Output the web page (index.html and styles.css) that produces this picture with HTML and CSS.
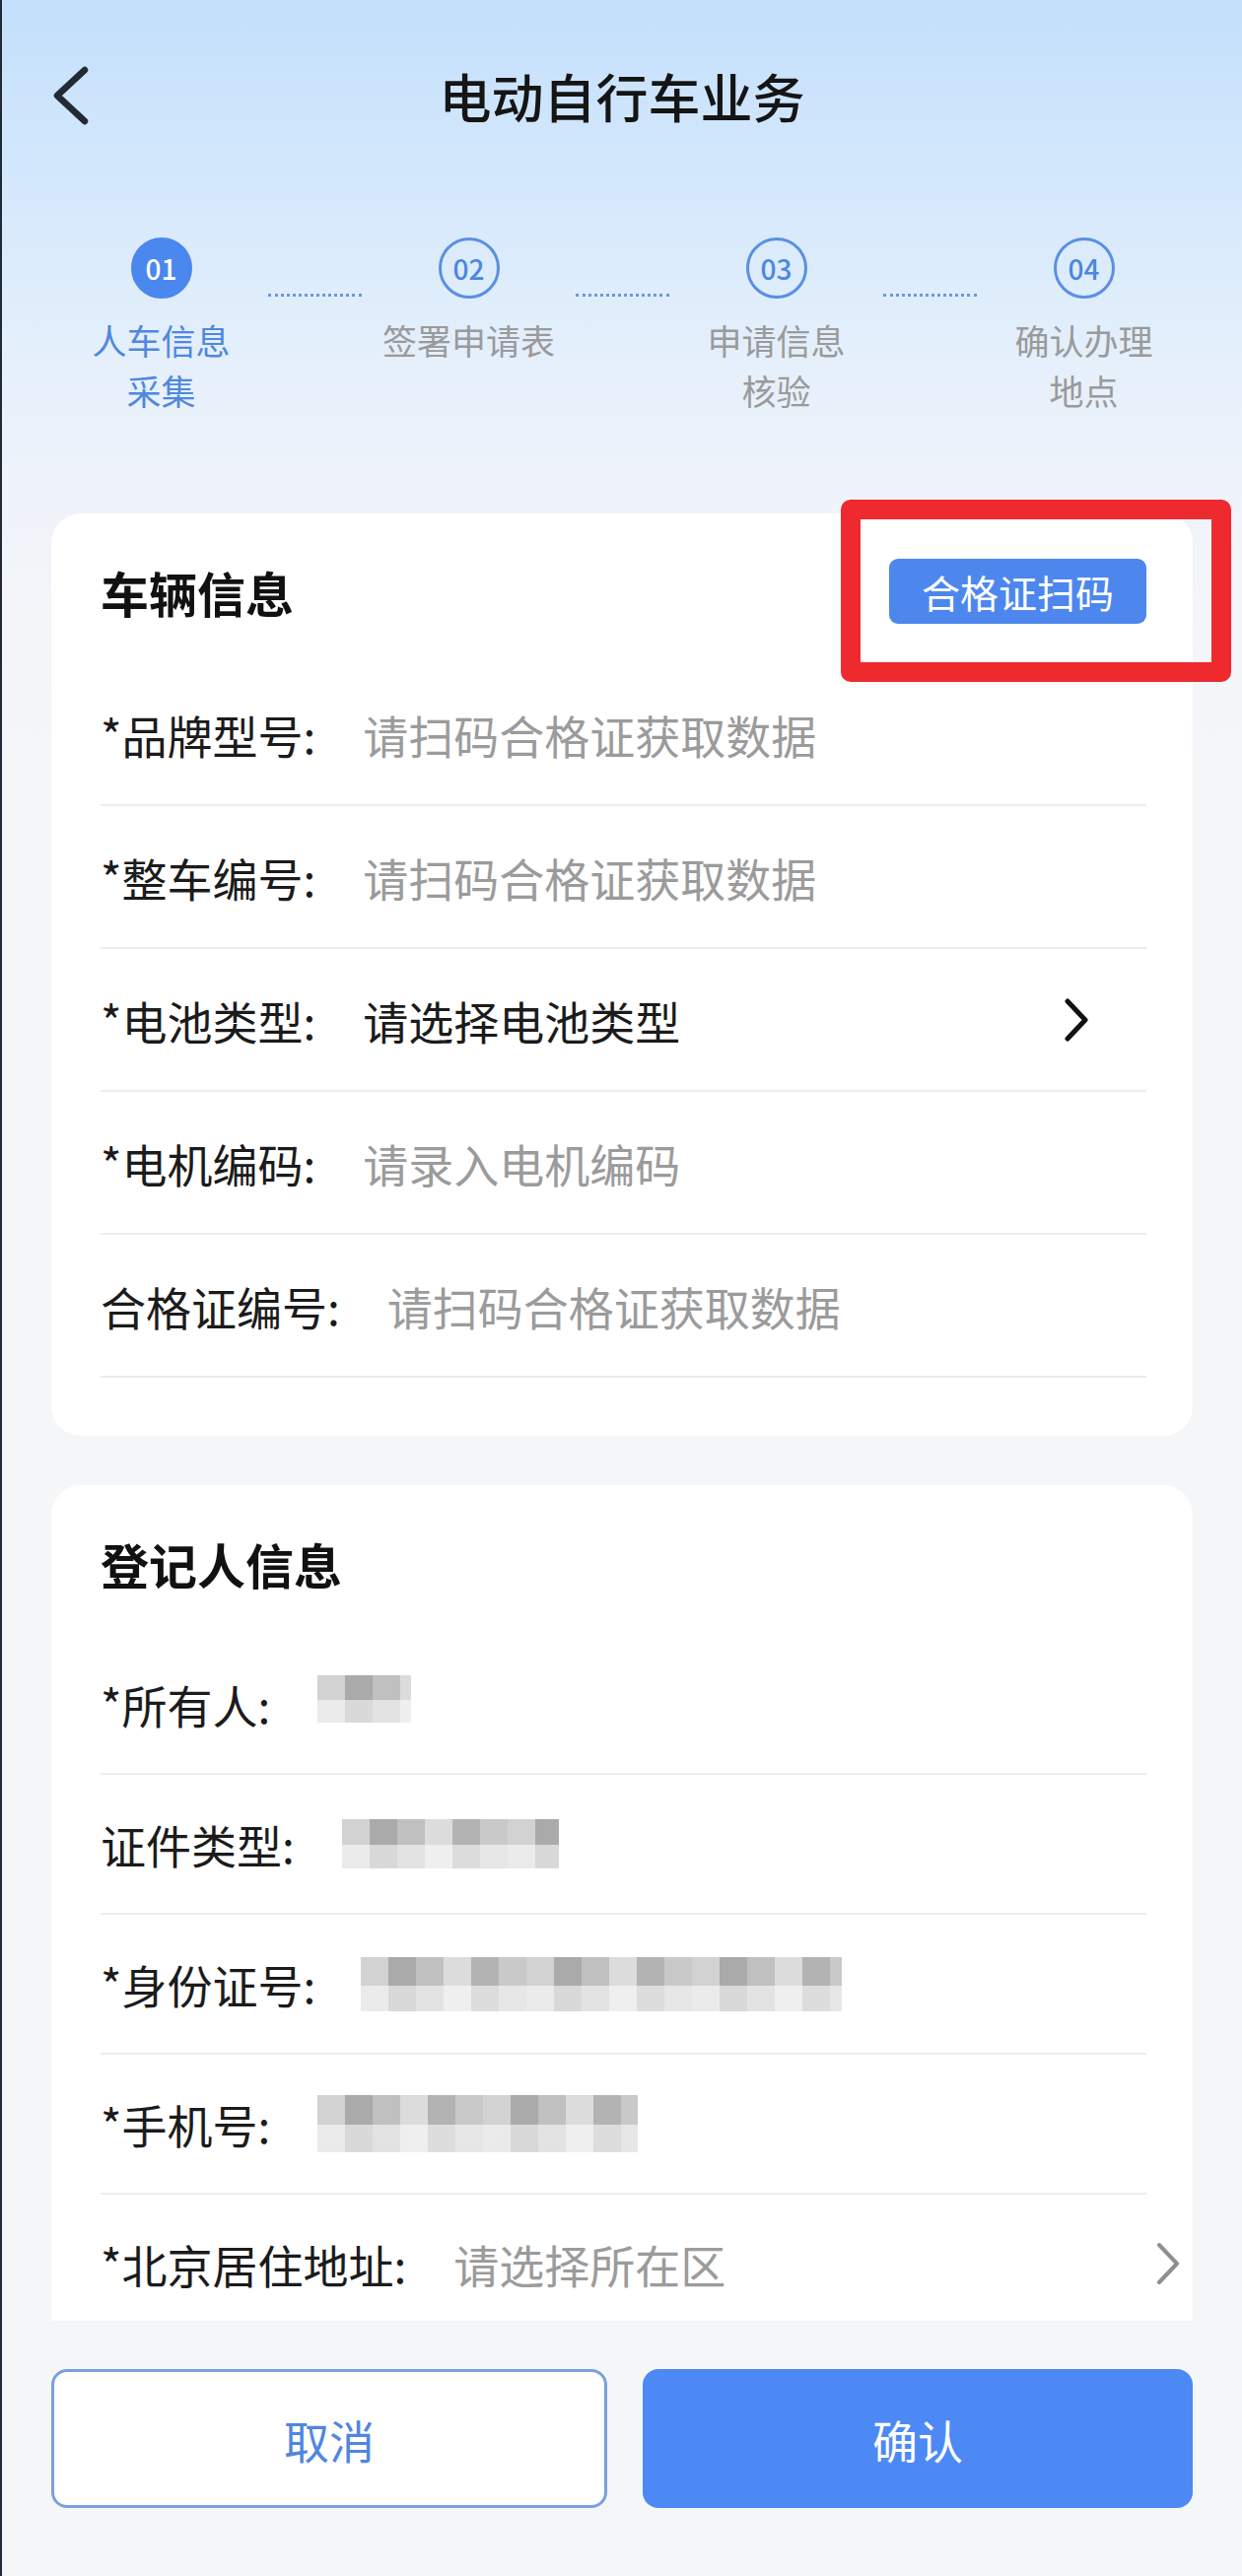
FILE: index.html
```html
<!DOCTYPE html>
<html lang="zh-CN">
<head>
    <meta charset="UTF-8">
    <meta name="viewport" content="width=device-width, initial-scale=1.0">
    <title>电动自行车业务</title>
    <link rel="stylesheet" href="styles.css">
</head>
<body>
    <div class="screen">
        <header class="topbar">
            <svg class="back" viewBox="0 0 40 60" width="40" height="60">
                <polyline points="33,4 5,30 33,56" />
            </svg>
            <h1>电动自行车业务</h1>
        </header>

        <div class="steps">
            <div class="step active">
                <span class="step-num">01</span>
                <span class="step-label">人车信息<br>采集</span>
            </div>
            <div class="step-line"></div>
            <div class="step">
                <span class="step-num">02</span>
                <span class="step-label">签署申请表</span>
            </div>
            <div class="step-line"></div>
            <div class="step">
                <span class="step-num">03</span>
                <span class="step-label">申请信息<br>核验</span>
            </div>
            <div class="step-line"></div>
            <div class="step">
                <span class="step-num">04</span>
                <span class="step-label">确认办理<br>地点</span>
            </div>
        </div>

        <main class="content">
            <section class="card">
                <div class="card-head">
                    <h2>车辆信息</h2>
                    <button class="scan-btn">合格证扫码</button>
                    <span class="mark"></span>
                </div>
                <div class="row">
                    <span class="label">*品牌型号:</span>
                    <span class="value placeholder">请扫码合格证获取数据</span>
                </div>
                <div class="row">
                    <span class="label">*整车编号:</span>
                    <span class="value placeholder">请扫码合格证获取数据</span>
                </div>
                <div class="row">
                    <span class="label">*电池类型:</span>
                    <span class="value">请选择电池类型</span>
                    <svg class="arrow" viewBox="0 0 26 44" width="26" height="44">
                        <polyline points="4,3 22,22 4,41" />
                    </svg>
                </div>
                <div class="row">
                    <span class="label">*电机编码:</span>
                    <span class="value placeholder">请录入电机编码</span>
                </div>
                <div class="row">
                    <span class="label">合格证编号:</span>
                    <span class="value placeholder">请扫码合格证获取数据</span>
                </div>
            </section>

            <section class="card card-compact">
                <div class="card-head">
                    <h2>登记人信息</h2>
                </div>
                <div class="row">
                    <span class="label">*所有人:</span>
                    <span class="blur blur-name"></span>
                </div>
                <div class="row">
                    <span class="label">证件类型:</span>
                    <span class="blur blur-type"></span>
                </div>
                <div class="row">
                    <span class="label">*身份证号:</span>
                    <span class="blur blur-id"></span>
                </div>
                <div class="row">
                    <span class="label">*手机号:</span>
                    <span class="blur blur-phone"></span>
                </div>
                <div class="row">
                    <span class="label">*北京居住地址:</span>
                    <span class="value placeholder">请选择所在区</span>
                    <svg class="arrow arrow-light" viewBox="0 0 26 44" width="26" height="44">
                        <polyline points="4,3 22,22 4,41" />
                    </svg>
                </div>
            </section>
        </main>

        <footer class="actions">
            <button class="btn btn-cancel">取消</button>
            <button class="btn btn-confirm">确认</button>
        </footer>
    </div>
</body>
</html>
```

FILE: styles.css
```css
/* Reset */
* {
    margin: 0;
    padding: 0;
    box-sizing: border-box;
}

body {
    width: 1260px;
    font-family: "Noto Sans CJK SC", "Noto Sans", sans-serif;
    color: #1b1b1b;
}

.screen {
    height: 2614px;
    display: flex;
    flex-direction: column;
    border-left: 2px solid #1f2a36;
    background: linear-gradient(180deg, #c3dffb 0, #d6e9fc 200px, #e6f0fb 380px, #eef3fa 480px, #f3f5f9 620px, #f5f6f8 800px);
}

/* Top bar */
.topbar {
    height: 194px;
    display: grid;
    grid-template-columns: 1fr auto 1fr;
    align-items: center;
}

.back {
    margin-left: 51px;
    fill: none;
    stroke: #222a33;
    stroke-width: 6.5;
    stroke-linecap: round;
    stroke-linejoin: round;
}

.topbar h1 {
    font-size: 53px;
    font-weight: 500;
    color: #151515;
}

/* Steps */
.steps {
    display: grid;
    grid-template-columns: 1fr 95px 1fr 95px 1fr 95px 1fr;
    padding: 0 52px 0 53px;
    margin-top: 47px;
}

.step {
    display: flex;
    flex-direction: column;
    align-items: center;
}

.step-num {
    width: 62px;
    height: 62px;
    border: 3px solid #5b8fe3;
    border-radius: 50%;
    display: flex;
    align-items: center;
    justify-content: center;
    font-size: 28px;
    font-weight: 500;
    color: #4a86e2;
}

.step-label {
    margin-top: 16px;
    font-size: 35px;
    line-height: 51px;
    text-align: center;
    color: #9a9a9a;
}

.step.active .step-num {
    background-color: #4a87ee;
    border-color: #4a87ee;
    color: #fff;
}

.step.active .step-label {
    color: #4f88de;
}

.step-line {
    align-self: start;
    margin-top: 57px;
    border-top: 3px dotted #6b98de;
}

/* Scroll area */
.content {
    flex: 1 1 0;
    min-height: 0;
    overflow: hidden;
    padding-top: 100px;
}

.card {
    margin: 0 50px 50px;
    padding: 36px 47px 59px 50px;
    background: #fff;
    border-radius: 30px;
}

.card-head {
    position: relative;
    height: 86px;
    margin-bottom: 30px;
    display: flex;
    align-items: center;
    justify-content: space-between;
}

.card-head h2 {
    font-size: 49px;
    font-weight: 700;
    color: #111;
}

.scan-btn {
    width: 261px;
    height: 66px;
    border: none;
    border-radius: 9px;
    background-color: #4d87ee;
    color: #fff;
    font-family: inherit;
    font-size: 39px;
}

/* red annotation box drawn over the screenshot */
.mark {
    position: absolute;
    top: -50px;
    right: -86px;
    width: 396px;
    height: 185px;
    border: 20px solid #ee2a2e;
    border-radius: 10px;
}

.row {
    height: 145px;
    display: flex;
    align-items: center;
    border-bottom: 2px solid #ececec;
    font-size: 46px;
}

.card-compact .row {
    height: 142px;
}

.label {
    margin-right: 48px;
    color: #1b1b1b;
}

.value {
    color: #1b1b1b;
}

.value.placeholder {
    color: #9b9b9b;
}

.arrow {
    margin-left: auto;
    margin-right: 58px;
    fill: none;
    stroke: #111;
    stroke-width: 5;
    stroke-linecap: round;
    stroke-linejoin: round;
}

.arrow-light {
    margin-right: -35px;
    stroke: #8e8e8e;
    stroke-width: 4;
}

/* masked personal data */
.blur {
    display: inline-block;
    background:
        linear-gradient(180deg, transparent 52%, rgba(255, 255, 255, 0.55) 52%),
        repeating-linear-gradient(90deg, #d2d2d2 0 28px, #aaaaaa 28px 56px, #c0c0c0 56px 84px, #dcdcdc 84px 112px, #b3b3b3 112px 140px, #c9c9c9 140px 168px);
}

.blur-name {
    width: 95px;
    height: 48px;
    margin-top: -10px;
}

.blur-type {
    width: 220px;
    height: 50px;
}

.blur-id {
    width: 488px;
    height: 55px;
    margin-left: -2px;
}

.blur-phone {
    width: 325px;
    height: 58px;
}

/* Bottom actions */
.actions {
    flex: none;
    height: 259px;
    display: flex;
    gap: 36px;
    padding: 49px 50px 0;
    background-color: #f5f6f8;
}

.btn {
    flex: 1;
    height: 141px;
    border-radius: 16px;
    font-family: inherit;
    font-size: 46px;
}

.btn-cancel {
    background: #fff;
    border: 3px solid #7aa0e0;
    color: #4f86df;
}

.btn-confirm {
    background-color: #4d89f5;
    border: none;
    color: #fff;
}
```
